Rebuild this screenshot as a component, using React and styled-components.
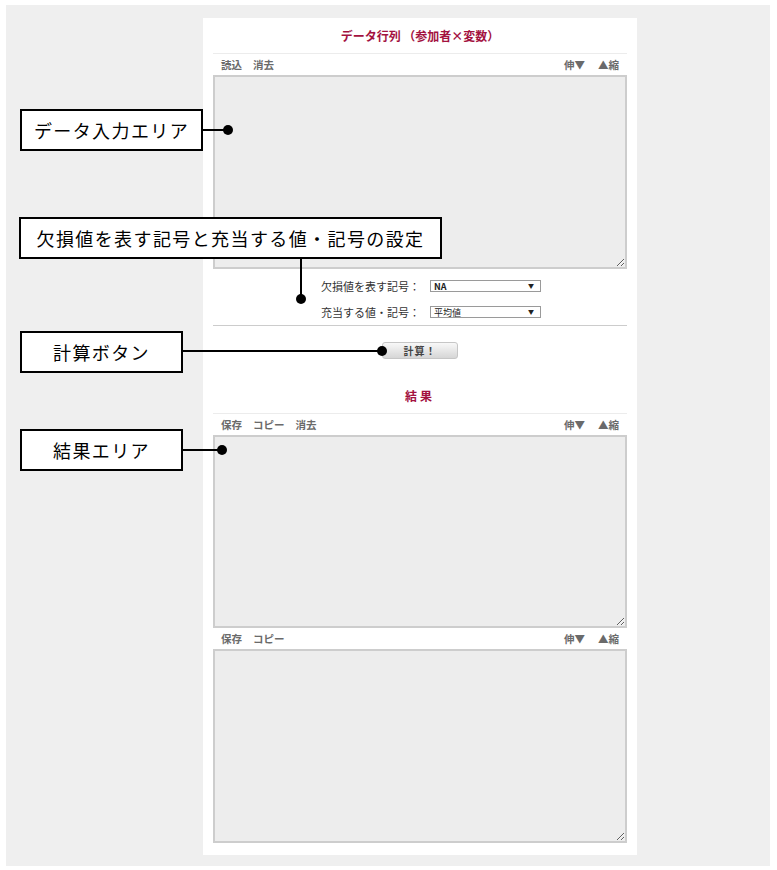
import React from "react";
import styled, { createGlobalStyle } from "styled-components";

const GlobalStyle = createGlobalStyle`
  body {
    margin: 0;
    background: #fff;
    font-family: "Noto Sans CJK JP", "Noto Sans", sans-serif;
  }
`;

const Page = styled.div`
  position: relative;
  width: 777px;
  height: 870px;
  padding: 5px 7px 4px 6px;
  box-sizing: border-box;
`;

const Canvas = styled.div`
  height: 861px;
  background: #efefef;
  padding: 13px 0 0 197px;
  box-sizing: border-box;
`;

const Panel = styled.div`
  width: 434px;
  height: 837px;
  background: #fff;
  padding: 0 10px;
  box-sizing: border-box;
`;

const Title = styled.div`
  height: 35px;
  display: flex;
  align-items: center;
  justify-content: center;
  border-bottom: 1px solid #ececec;
  color: #a3123f;
  font-size: 12px;
  font-weight: 700;
  letter-spacing: ${(p) => p.$spread || "0"};
  margin-top: ${(p) => p.$gap || "0"};
`;

const Toolbar = styled.div`
  height: 21px;
  display: flex;
  align-items: center;
  padding: 0 8px;
  font-size: 10.5px;
  font-weight: 700;
  color: #6a6a6a;
`;

const ToolGroup = styled.div`
  display: flex;
  gap: ${(p) => p.$gap || "11px"};
  margin-left: ${(p) => (p.$right ? "auto" : "0")};
`;

const Area = styled.textarea`
  display: block;
  width: 100%;
  height: ${(p) => p.$h || "194px"};
  margin: 0;
  box-sizing: border-box;
  background: #ededed;
  border: 2px solid #cdcdcd;
  resize: vertical;
  outline: none;
`;

const Settings = styled.div`
  padding: 4px 0 0 108px;
`;

const SettingRow = styled.div`
  height: 26px;
  display: grid;
  grid-template-columns: 99px 111px;
  column-gap: 10px;
  align-items: center;
`;

const SettingLabel = styled.span`
  font-size: 11px;
  color: #333;
  white-space: nowrap;
`;

const SelectBox = styled.div`
  height: 12px;
  box-sizing: border-box;
  border: 1px solid #9a9a9a;
  background: #fff;
  display: flex;
  align-items: center;
  padding: 0 6px 0 3px;
  font-size: 9px;
  font-weight: ${(p) => (p.$bold ? 700 : 400)};
  color: #222;
  line-height: 1;
  span:last-child {
    margin-left: auto;
    font-size: 6px;
  }
`;

const Divider = styled.div`
  border-top: 1px solid #cccccc;
`;

const ButtonRow = styled.div`
  display: flex;
  justify-content: center;
  padding-top: 16px;
`;

const CalcButton = styled.button`
  width: 76px;
  height: 17px;
  padding: 0;
  border: 1px solid #c6c6c6;
  border-radius: 3px;
  background: linear-gradient(#f8f8f8, #d6d6d6);
  font-family: inherit;
  font-size: 10px;
  font-weight: 700;
  color: #444;
  letter-spacing: 1px;
  line-height: 1;
`;

/* annotation callouts drawn over the form */
const Note = styled.div`
  position: absolute;
  left: ${(p) => p.$x}px;
  top: ${(p) => p.$y}px;
  width: ${(p) => p.$w}px;
  height: 42px;
  box-sizing: border-box;
  border: 2px solid #000;
  background: #fff;
  display: flex;
  align-items: center;
  justify-content: center;
  font-size: 18px;
  letter-spacing: 1.4px;
  color: #000;
  white-space: nowrap;
`;

const HLine = styled.div`
  position: absolute;
  left: ${(p) => p.$x}px;
  top: ${(p) => p.$y - 1}px;
  width: ${(p) => p.$len}px;
  height: 2px;
  background: #000;
`;

const VLine = styled.div`
  position: absolute;
  left: ${(p) => p.$x - 1}px;
  top: ${(p) => p.$y}px;
  width: 2px;
  height: ${(p) => p.$len}px;
  background: #000;
`;

const Dot = styled.div`
  position: absolute;
  left: ${(p) => p.$x - 5}px;
  top: ${(p) => p.$y - 5}px;
  width: 10px;
  height: 10px;
  border-radius: 50%;
  background: #000;
`;

const Select = ({ value, bold }) => (
  <SelectBox $bold={bold}>
    <span>{value}</span>
    <span>▼</span>
  </SelectBox>
);

const Tools = ({ left }) => (
  <Toolbar>
    <ToolGroup>
      {left.map((t) => (
        <span key={t}>{t}</span>
      ))}
    </ToolGroup>
    <ToolGroup $right $gap="13px">
      <span>伸▼</span>
      <span>▲縮</span>
    </ToolGroup>
  </Toolbar>
);

export default function App() {
  return (
    <>
      <GlobalStyle />
      <Page>
        <Canvas>
          <Panel>
            <Title>データ行列 （参加者×変数）</Title>
            <Tools left={["読込", "消去"]} />
            <Area readOnly />
            <Settings>
              <SettingRow>
                <SettingLabel>欠損値を表す記号：</SettingLabel>
                <Select value="NA" bold />
              </SettingRow>
              <SettingRow>
                <SettingLabel>充当する値・記号：</SettingLabel>
                <Select value="平均値" />
              </SettingRow>
            </Settings>
            <Divider />
            <ButtonRow>
              <CalcButton>計算！</CalcButton>
            </ButtonRow>
            <Title $gap="19px" $spread="3px">結果</Title>
            <Tools left={["保存", "コピー", "消去"]} />
            <Area readOnly $h="193px" />
            <Tools left={["保存", "コピー"]} />
            <Area readOnly />
          </Panel>
        </Canvas>

        <Note $x={20} $y={109} $w={183}>データ入力エリア</Note>
        <HLine $x={203} $y={130} $len={25} />
        <Dot $x={228} $y={130} />

        <Note $x={19} $y={217} $w={423}>欠損値を表す記号と充当する値・記号の設定</Note>
        <VLine $x={301} $y={258} $len={41} />
        <Dot $x={301} $y={299} />

        <Note $x={20} $y={331} $w={163}>計算ボタン</Note>
        <HLine $x={183} $y={351} $len={199} />
        <Dot $x={382} $y={351} />

        <Note $x={20} $y={429} $w={163}>結果エリア</Note>
        <HLine $x={183} $y={450} $len={39} />
        <Dot $x={222} $y={450} />
      </Page>
    </>
  );
}
